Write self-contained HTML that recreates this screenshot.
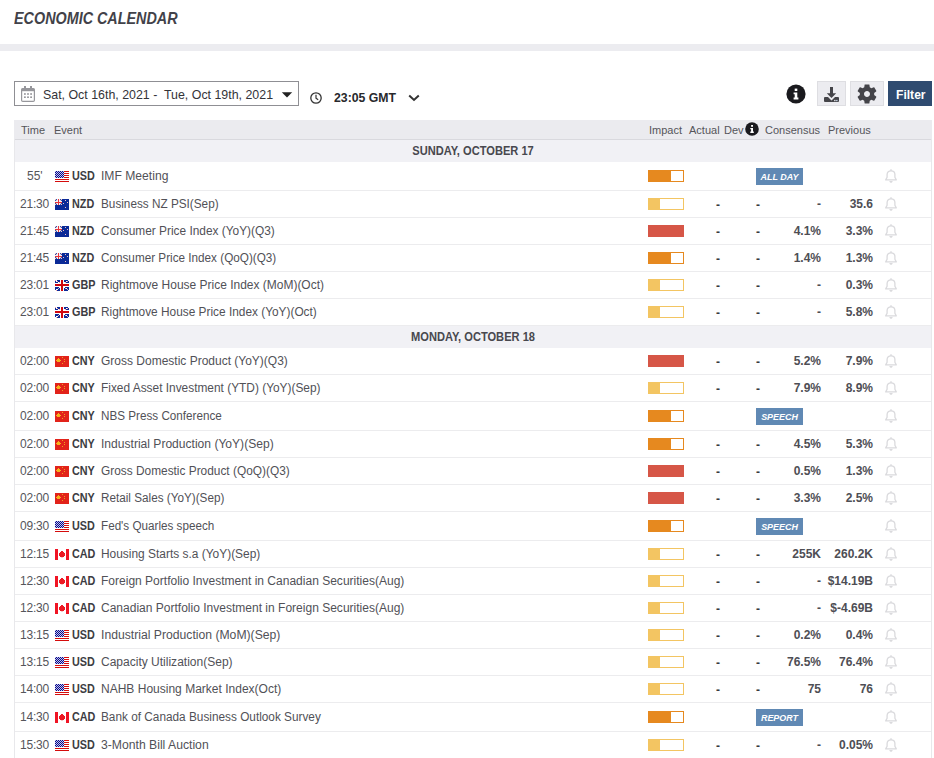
<!DOCTYPE html>
<html><head><meta charset="utf-8"><style>
html,body{margin:0;padding:0;width:934px;height:758px;overflow:hidden;background:#fff}
body{position:relative;font-family:"Liberation Sans", sans-serif;}
.a{position:absolute;white-space:nowrap;}
.t{position:absolute;white-space:nowrap;line-height:1;}
</style></head><body>

<div class="t" style="left:14px;top:10px;font-size:17px;font-weight:bold;font-style:italic;color:#424249;transform-origin:0 0;transform:scaleX(0.845)">ECONOMIC CALENDAR</div>
<div class="a" style="left:0;top:44px;width:934px;height:7px;background:#ececf0"></div>
<div class="a" style="left:14px;top:81px;width:283px;height:23px;border:1px solid #8f8f94;background:#fff"></div>
<svg class="a" style="left:21px;top:86px" width="14" height="16" viewBox="0 0 14 16"><rect x="0.6" y="2.6" width="12.8" height="12.8" rx="1.2" fill="none" stroke="#96969b" stroke-width="1.2"/><rect x="0.6" y="2.6" width="12.8" height="2.6" fill="#96969b"/><rect x="3" y="0" width="2" height="3" fill="#96969b"/><rect x="9" y="0" width="2" height="3" fill="#96969b"/><rect x="3" y="7.2" width="1.8" height="1.6" fill="#96969b"/><rect x="3" y="10.4" width="1.8" height="1.6" fill="#96969b"/><rect x="6.1" y="7.2" width="1.8" height="1.6" fill="#96969b"/><rect x="6.1" y="10.4" width="1.8" height="1.6" fill="#96969b"/><rect x="9.2" y="7.2" width="1.8" height="1.6" fill="#96969b"/><rect x="9.2" y="10.4" width="1.8" height="1.6" fill="#96969b"/></svg>
<div class="t" style="left:43px;top:88px;font-size:13px;color:#333338;transform-origin:0 0;transform:scaleX(0.953)">Sat, Oct 16th, 2021 -&nbsp; Tue, Oct 19th, 2021</div>
<svg class="a" style="left:281px;top:92px" width="12" height="7" viewBox="0 0 12 7"><path d="M0.8 0.3H11.2L6 5.6Z" fill="#222"/></svg>
<svg class="a" style="left:310px;top:92px" width="12" height="12" viewBox="0 0 12 12"><circle cx="6" cy="6" r="5.2" fill="none" stroke="#333" stroke-width="1.3"/><path d="M6 2.8V6.2L8.2 7.8" fill="none" stroke="#333" stroke-width="1.2"/></svg>
<div class="t" style="left:334px;top:91px;font-size:13px;font-weight:bold;color:#28282c;transform-origin:0 0;transform:scaleX(0.943)">23:05 GMT</div>
<svg class="a" style="left:408px;top:94px" width="12" height="8" viewBox="0 0 12 8"><path d="M1.2 1.5L6 6L10.8 1.5" fill="none" stroke="#333" stroke-width="2"/></svg>
<svg class="a" style="left:786px;top:84px" width="20" height="20" viewBox="0 0 20 20"><circle cx="10" cy="10" r="9.6" fill="#1a1a1e"/><rect x="8.7" y="4.6" width="2.6" height="2.4" fill="#fff"/><path d="M7.6 8.4H11.3V13.6H12.4V15.4H7.6V13.6H8.7V10.2H7.6Z" fill="#fff"/></svg>
<div class="a" style="left:817px;top:81px;width:27px;height:23px;border:1px solid #dedee2;background:#ececf0"></div>
<svg class="a" style="left:824px;top:87px" width="15" height="15" viewBox="0 0 15 15"><path d="M6 0H9V6.2H12.2L7.5 11L2.8 6.2H6Z" fill="#444449"/><path d="M0 11Q0 10 1 10H4L7.5 13.4L11 10H14Q15 10 15 11V14Q15 15 14 15H1Q0 15 0 14Z" fill="#444449"/><rect x="10.2" y="12.9" width="1.3" height="1.3" fill="#f4f4f8"/><rect x="12.2" y="12.9" width="1.3" height="1.3" fill="#cfe0f4"/></svg>
<div class="a" style="left:850px;top:81px;width:32px;height:23px;border:1px solid #dedee2;background:#ececf0"></div>
<svg class="a" style="left:855px;top:82px" width="24" height="24" viewBox="0 0 24 24"><path fill-rule="evenodd" d="M19.14,12.94c0.04-0.3,0.06-0.61,0.06-0.94c0-0.32-0.02-0.64-0.07-0.94l2.03-1.58c0.18-0.14,0.23-0.41,0.12-0.61l-1.92-3.32c-0.12-0.22-0.37-0.29-0.59-0.22l-2.39,0.96c-0.5-0.38-1.03-0.7-1.62-0.94L14.4,2.81c-0.04-0.24-0.24-0.41-0.48-0.41h-3.84c-0.24,0-0.43,0.17-0.47,0.41L9.25,5.35C8.66,5.59,8.12,5.92,7.63,6.29L5.24,5.33c-0.22-0.08-0.47,0-0.59,0.22L2.74,8.87C2.62,9.08,2.66,9.34,2.86,9.48l2.03,1.58C4.84,11.36,4.8,11.69,4.8,12s0.02,0.64,0.07,0.94l-2.03,1.58c-0.18,0.14-0.23,0.41-0.12,0.61l1.92,3.32c0.12,0.22,0.37,0.29,0.59,0.22l2.39-0.96c0.5,0.38,1.03,0.7,1.62,0.94l0.36,2.54c0.05,0.24,0.24,0.41,0.48,0.41h3.84c0.24,0,0.44-0.17,0.47-0.41l0.36-2.54c0.59-0.24,1.13-0.56,1.62-0.94l2.39,0.96c0.22,0.08,0.47,0,0.59-0.22l1.92-3.32c0.12-0.22,0.07-0.47-0.12-0.61L19.14,12.94z M12,15C10.34,15 9,13.66 9,12S10.34,9 12,9S15,10.34 15,12S13.66,15 12,15z" fill="#444449"/></svg>
<div class="a" style="left:888px;top:81px;width:44px;height:25px;background:#2f4b70"></div>
<div class="t" style="left:896px;top:88px;font-size:13px;font-weight:bold;color:#fff;transform-origin:0 0;transform:scaleX(0.93)">Filter</div>
<div class="a" style="left:14px;top:120px;width:918px;height:19px;background:#ebebef;border-bottom:1px solid #d9d9de"></div>
<div class="t" style="left:21px;top:125px;font-size:11px;color:#55555a">Time</div>
<div class="t" style="left:54px;top:125px;font-size:11px;color:#55555a">Event</div>
<div class="t" style="left:649px;top:125px;font-size:11px;color:#55555a">Impact</div>
<div class="t" style="left:689px;top:125px;font-size:11px;color:#55555a">Actual</div>
<div class="t" style="left:724px;top:125px;font-size:11px;color:#55555a">Dev</div>
<div class="t" style="left:765px;top:125px;font-size:11px;color:#55555a">Consensus</div>
<div class="t" style="left:828px;top:125px;font-size:11px;color:#55555a">Previous</div>
<svg class="a" style="left:745px;top:122px" width="14" height="14" viewBox="0 0 14 14"><circle cx="7" cy="7" r="6.8" fill="#1a1a1e"/><rect x="6.1" y="3" width="1.9" height="1.8" fill="#fff"/><path d="M5.3 5.9H8V9.6H8.8V11H5.3V9.6H6.1V7.2H5.3Z" fill="#fff"/></svg>
<div class="a" style="left:14px;top:140px;width:918px;height:22px;background:#f1f1f5"></div>
<div class="t" style="left:14px;width:918px;text-align:center;top:145px;font-size:12px;font-weight:bold;color:#48484e;transform:scaleX(0.925)">SUNDAY, OCTOBER 17</div>
<div class="a" style="left:14px;top:162px;width:918px;height:28px;border-bottom:1px solid #ececee"></div>
<div class="t" style="left:27px;top:170px;font-size:12px;color:#55555a">55'</div>
<svg class="a" style="left:55px;top:171px" width="14" height="11" viewBox="0 0 14 11" shape-rendering="crispEdges"><rect x="0" y="0" width="14" height="1" fill="#d50c0c"/><rect x="0" y="1" width="14" height="1" fill="#fff"/><rect x="0" y="2" width="14" height="1" fill="#d50c0c"/><rect x="0" y="3" width="14" height="1" fill="#fff"/><rect x="0" y="4" width="14" height="1" fill="#d50c0c"/><rect x="0" y="5" width="14" height="1" fill="#fff"/><rect x="0" y="6" width="14" height="1" fill="#d50c0c"/><rect x="0" y="7" width="14" height="1" fill="#fff"/><rect x="0" y="8" width="14" height="1" fill="#d50c0c"/><rect x="0" y="9" width="14" height="1" fill="#fff"/><rect x="0" y="10" width="14" height="1" fill="#d50c0c"/><rect x="0" y="0" width="9" height="7" fill="#c4c6e6"/><rect x="1" y="0" width="1" height="1" fill="#06068f"/><rect x="3" y="0" width="1" height="1" fill="#06068f"/><rect x="5" y="0" width="1" height="1" fill="#06068f"/><rect x="7" y="0" width="1" height="1" fill="#06068f"/><rect x="0" y="1" width="1" height="1" fill="#06068f"/><rect x="2" y="1" width="1" height="1" fill="#06068f"/><rect x="4" y="1" width="1" height="1" fill="#06068f"/><rect x="6" y="1" width="1" height="1" fill="#06068f"/><rect x="8" y="1" width="1" height="1" fill="#06068f"/><rect x="1" y="2" width="1" height="1" fill="#06068f"/><rect x="3" y="2" width="1" height="1" fill="#06068f"/><rect x="5" y="2" width="1" height="1" fill="#06068f"/><rect x="7" y="2" width="1" height="1" fill="#06068f"/><rect x="0" y="3" width="1" height="1" fill="#06068f"/><rect x="2" y="3" width="1" height="1" fill="#06068f"/><rect x="4" y="3" width="1" height="1" fill="#06068f"/><rect x="6" y="3" width="1" height="1" fill="#06068f"/><rect x="8" y="3" width="1" height="1" fill="#06068f"/><rect x="1" y="4" width="1" height="1" fill="#06068f"/><rect x="3" y="4" width="1" height="1" fill="#06068f"/><rect x="5" y="4" width="1" height="1" fill="#06068f"/><rect x="7" y="4" width="1" height="1" fill="#06068f"/><rect x="0" y="5" width="1" height="1" fill="#06068f"/><rect x="2" y="5" width="1" height="1" fill="#06068f"/><rect x="4" y="5" width="1" height="1" fill="#06068f"/><rect x="6" y="5" width="1" height="1" fill="#06068f"/><rect x="8" y="5" width="1" height="1" fill="#06068f"/><rect x="1" y="6" width="1" height="1" fill="#06068f"/><rect x="3" y="6" width="1" height="1" fill="#06068f"/><rect x="5" y="6" width="1" height="1" fill="#06068f"/><rect x="7" y="6" width="1" height="1" fill="#06068f"/></svg>
<div class="t" style="left:72px;top:170px;font-size:12px;font-weight:bold;color:#3c3c42;transform-origin:0 0;transform:scaleX(0.9)">USD</div>
<div class="t" style="left:101px;top:170px;font-size:12px;color:#515157;transform-origin:0 0;transform:scaleX(1.0108)">IMF Meeting</div>
<div class="a" style="left:648px;top:170px;width:34px;height:10px;border:1px solid #e6891f;background:#fff"></div>
<div class="a" style="left:648px;top:170px;width:23px;height:12px;background:#e6891f"></div>
<div class="a" style="left:756px;top:168px;width:47px;height:17px;background:#6089b4"></div>
<div class="t" style="left:756px;width:47px;text-align:center;top:171.6px;font-size:9.5px;font-weight:bold;font-style:italic;color:#fff;transform:scaleX(0.94)">ALL DAY</div>
<svg width="13" height="15" viewBox="0.5 0.3 13 15" style="position:absolute;left:885px;top:169px"><path d="M6.5 0.6V2.2" stroke="#dadadd" stroke-width="1.4"/><path d="M1.2 11.2L2.6 8.6V5.8C2.6 3.6 4.3 2.1 6.5 2.1C8.7 2.1 10.4 3.6 10.4 5.8V8.6L11.8 11.2Z" fill="none" stroke="#dadadd" stroke-width="1.3" stroke-linejoin="round"/><path d="M4.9 12.2H8.1C8.1 13.3 7.4 14 6.5 14C5.6 14 4.9 13.3 4.9 12.2Z" fill="#dadadd"/></svg>
<div class="a" style="left:14px;top:191px;width:918px;height:26px;border-bottom:1px solid #ececee"></div>
<div class="t" style="left:20px;top:198px;font-size:12px;color:#55555a;letter-spacing:-0.2px">21:30</div>
<svg class="a" style="left:55px;top:199px" width="14" height="11" viewBox="0 0 14 11" shape-rendering="crispEdges"><rect x="0" y="0" width="14" height="11" fill="#0b2a97"/><rect x="0" y="0" width="1" height="1" fill="#f3c9c3"/><rect x="1" y="0" width="1" height="1" fill="#2c4fb0"/><rect x="2" y="0" width="1" height="1" fill="#f4f4fa"/><rect x="3" y="0" width="1" height="1" fill="#e8343a"/><rect x="4" y="0" width="1" height="1" fill="#f4f4fa"/><rect x="5" y="0" width="1" height="1" fill="#2c4fb0"/><rect x="6" y="0" width="1" height="1" fill="#f3c9c3"/><rect x="0" y="1" width="1" height="1" fill="#2c4fb0"/><rect x="1" y="1" width="1" height="1" fill="#f3c9c3"/><rect x="2" y="1" width="1" height="1" fill="#f4f4fa"/><rect x="3" y="1" width="1" height="1" fill="#e8343a"/><rect x="4" y="1" width="1" height="1" fill="#f4f4fa"/><rect x="5" y="1" width="1" height="1" fill="#f3c9c3"/><rect x="6" y="1" width="1" height="1" fill="#2c4fb0"/><rect x="0" y="2" width="1" height="1" fill="#f4f4fa"/><rect x="1" y="2" width="1" height="1" fill="#f4f4fa"/><rect x="2" y="2" width="1" height="1" fill="#f4f4fa"/><rect x="3" y="2" width="1" height="1" fill="#e8343a"/><rect x="4" y="2" width="1" height="1" fill="#f4f4fa"/><rect x="5" y="2" width="1" height="1" fill="#f4f4fa"/><rect x="6" y="2" width="1" height="1" fill="#f4f4fa"/><rect x="0" y="3" width="1" height="1" fill="#e8343a"/><rect x="1" y="3" width="1" height="1" fill="#e8343a"/><rect x="2" y="3" width="1" height="1" fill="#e8343a"/><rect x="3" y="3" width="1" height="1" fill="#e8343a"/><rect x="4" y="3" width="1" height="1" fill="#e8343a"/><rect x="5" y="3" width="1" height="1" fill="#e8343a"/><rect x="6" y="3" width="1" height="1" fill="#e8343a"/><rect x="0" y="4" width="1" height="1" fill="#2c4fb0"/><rect x="1" y="4" width="1" height="1" fill="#f3c9c3"/><rect x="2" y="4" width="1" height="1" fill="#f4f4fa"/><rect x="3" y="4" width="1" height="1" fill="#e8343a"/><rect x="4" y="4" width="1" height="1" fill="#f4f4fa"/><rect x="5" y="4" width="1" height="1" fill="#f3c9c3"/><rect x="6" y="4" width="1" height="1" fill="#2c4fb0"/><rect x="0" y="5" width="1" height="1" fill="#f3c9c3"/><rect x="1" y="5" width="1" height="1" fill="#2c4fb0"/><rect x="2" y="5" width="1" height="1" fill="#f4f4fa"/><rect x="3" y="5" width="1" height="1" fill="#e8343a"/><rect x="4" y="5" width="1" height="1" fill="#f4f4fa"/><rect x="5" y="5" width="1" height="1" fill="#2c4fb0"/><rect x="6" y="5" width="1" height="1" fill="#f3c9c3"/><rect x="10" y="1" width="1" height="1" fill="#f0c0c0"/><rect x="12" y="3" width="1" height="1" fill="#f0c0c0"/><rect x="8" y="4" width="1" height="1" fill="#f0c0c0"/><rect x="10" y="8" width="1" height="1" fill="#f0c0c0"/></svg>
<div class="t" style="left:72px;top:198px;font-size:12px;font-weight:bold;color:#3c3c42;transform-origin:0 0;transform:scaleX(0.9)">NZD</div>
<div class="t" style="left:101px;top:198px;font-size:12px;color:#515157;transform-origin:0 0;transform:scaleX(0.9797)">Business NZ PSI(Sep)</div>
<div class="a" style="left:648px;top:198px;width:34px;height:10px;border:1px solid #f3c562;background:#fff"></div>
<div class="a" style="left:648px;top:198px;width:12px;height:12px;background:#f3c562"></div>
<div class="t" style="left:680px;width:40px;text-align:right;top:199px;font-size:12px;font-weight:bold;color:#3a3a40">-</div>
<div class="t" style="left:720px;width:40px;text-align:right;top:199px;font-size:12px;font-weight:bold;color:#3a3a40">-</div>
<div class="t" style="left:761px;width:60px;text-align:right;top:198px;font-size:12px;font-weight:bold;color:#4e4e54">-</div>
<div class="t" style="left:812px;width:61px;text-align:right;top:198px;font-size:12px;font-weight:bold;color:#4e4e54">35.6</div>
<svg width="13" height="15" viewBox="0.5 0.3 13 15" style="position:absolute;left:885px;top:197px"><path d="M6.5 0.6V2.2" stroke="#dadadd" stroke-width="1.4"/><path d="M1.2 11.2L2.6 8.6V5.8C2.6 3.6 4.3 2.1 6.5 2.1C8.7 2.1 10.4 3.6 10.4 5.8V8.6L11.8 11.2Z" fill="none" stroke="#dadadd" stroke-width="1.3" stroke-linejoin="round"/><path d="M4.9 12.2H8.1C8.1 13.3 7.4 14 6.5 14C5.6 14 4.9 13.3 4.9 12.2Z" fill="#dadadd"/></svg>
<div class="a" style="left:14px;top:218px;width:918px;height:26px;border-bottom:1px solid #ececee"></div>
<div class="t" style="left:20px;top:225px;font-size:12px;color:#55555a;letter-spacing:-0.2px">21:45</div>
<svg class="a" style="left:55px;top:226px" width="14" height="11" viewBox="0 0 14 11" shape-rendering="crispEdges"><rect x="0" y="0" width="14" height="11" fill="#0b2a97"/><rect x="0" y="0" width="1" height="1" fill="#f3c9c3"/><rect x="1" y="0" width="1" height="1" fill="#2c4fb0"/><rect x="2" y="0" width="1" height="1" fill="#f4f4fa"/><rect x="3" y="0" width="1" height="1" fill="#e8343a"/><rect x="4" y="0" width="1" height="1" fill="#f4f4fa"/><rect x="5" y="0" width="1" height="1" fill="#2c4fb0"/><rect x="6" y="0" width="1" height="1" fill="#f3c9c3"/><rect x="0" y="1" width="1" height="1" fill="#2c4fb0"/><rect x="1" y="1" width="1" height="1" fill="#f3c9c3"/><rect x="2" y="1" width="1" height="1" fill="#f4f4fa"/><rect x="3" y="1" width="1" height="1" fill="#e8343a"/><rect x="4" y="1" width="1" height="1" fill="#f4f4fa"/><rect x="5" y="1" width="1" height="1" fill="#f3c9c3"/><rect x="6" y="1" width="1" height="1" fill="#2c4fb0"/><rect x="0" y="2" width="1" height="1" fill="#f4f4fa"/><rect x="1" y="2" width="1" height="1" fill="#f4f4fa"/><rect x="2" y="2" width="1" height="1" fill="#f4f4fa"/><rect x="3" y="2" width="1" height="1" fill="#e8343a"/><rect x="4" y="2" width="1" height="1" fill="#f4f4fa"/><rect x="5" y="2" width="1" height="1" fill="#f4f4fa"/><rect x="6" y="2" width="1" height="1" fill="#f4f4fa"/><rect x="0" y="3" width="1" height="1" fill="#e8343a"/><rect x="1" y="3" width="1" height="1" fill="#e8343a"/><rect x="2" y="3" width="1" height="1" fill="#e8343a"/><rect x="3" y="3" width="1" height="1" fill="#e8343a"/><rect x="4" y="3" width="1" height="1" fill="#e8343a"/><rect x="5" y="3" width="1" height="1" fill="#e8343a"/><rect x="6" y="3" width="1" height="1" fill="#e8343a"/><rect x="0" y="4" width="1" height="1" fill="#2c4fb0"/><rect x="1" y="4" width="1" height="1" fill="#f3c9c3"/><rect x="2" y="4" width="1" height="1" fill="#f4f4fa"/><rect x="3" y="4" width="1" height="1" fill="#e8343a"/><rect x="4" y="4" width="1" height="1" fill="#f4f4fa"/><rect x="5" y="4" width="1" height="1" fill="#f3c9c3"/><rect x="6" y="4" width="1" height="1" fill="#2c4fb0"/><rect x="0" y="5" width="1" height="1" fill="#f3c9c3"/><rect x="1" y="5" width="1" height="1" fill="#2c4fb0"/><rect x="2" y="5" width="1" height="1" fill="#f4f4fa"/><rect x="3" y="5" width="1" height="1" fill="#e8343a"/><rect x="4" y="5" width="1" height="1" fill="#f4f4fa"/><rect x="5" y="5" width="1" height="1" fill="#2c4fb0"/><rect x="6" y="5" width="1" height="1" fill="#f3c9c3"/><rect x="10" y="1" width="1" height="1" fill="#f0c0c0"/><rect x="12" y="3" width="1" height="1" fill="#f0c0c0"/><rect x="8" y="4" width="1" height="1" fill="#f0c0c0"/><rect x="10" y="8" width="1" height="1" fill="#f0c0c0"/></svg>
<div class="t" style="left:72px;top:225px;font-size:12px;font-weight:bold;color:#3c3c42;transform-origin:0 0;transform:scaleX(0.9)">NZD</div>
<div class="t" style="left:101px;top:225px;font-size:12px;color:#515157;transform-origin:0 0;transform:scaleX(0.9897)">Consumer Price Index (YoY)(Q3)</div>
<div class="a" style="left:648px;top:225px;width:34px;height:10px;border:1px solid #d65647;background:#fff"></div>
<div class="a" style="left:648px;top:225px;width:36px;height:12px;background:#d65647"></div>
<div class="t" style="left:680px;width:40px;text-align:right;top:226px;font-size:12px;font-weight:bold;color:#3a3a40">-</div>
<div class="t" style="left:720px;width:40px;text-align:right;top:226px;font-size:12px;font-weight:bold;color:#3a3a40">-</div>
<div class="t" style="left:761px;width:60px;text-align:right;top:225px;font-size:12px;font-weight:bold;color:#4e4e54">4.1%</div>
<div class="t" style="left:812px;width:61px;text-align:right;top:225px;font-size:12px;font-weight:bold;color:#4e4e54">3.3%</div>
<svg width="13" height="15" viewBox="0.5 0.3 13 15" style="position:absolute;left:885px;top:224px"><path d="M6.5 0.6V2.2" stroke="#dadadd" stroke-width="1.4"/><path d="M1.2 11.2L2.6 8.6V5.8C2.6 3.6 4.3 2.1 6.5 2.1C8.7 2.1 10.4 3.6 10.4 5.8V8.6L11.8 11.2Z" fill="none" stroke="#dadadd" stroke-width="1.3" stroke-linejoin="round"/><path d="M4.9 12.2H8.1C8.1 13.3 7.4 14 6.5 14C5.6 14 4.9 13.3 4.9 12.2Z" fill="#dadadd"/></svg>
<div class="a" style="left:14px;top:245px;width:918px;height:26px;border-bottom:1px solid #ececee"></div>
<div class="t" style="left:20px;top:252px;font-size:12px;color:#55555a;letter-spacing:-0.2px">21:45</div>
<svg class="a" style="left:55px;top:253px" width="14" height="11" viewBox="0 0 14 11" shape-rendering="crispEdges"><rect x="0" y="0" width="14" height="11" fill="#0b2a97"/><rect x="0" y="0" width="1" height="1" fill="#f3c9c3"/><rect x="1" y="0" width="1" height="1" fill="#2c4fb0"/><rect x="2" y="0" width="1" height="1" fill="#f4f4fa"/><rect x="3" y="0" width="1" height="1" fill="#e8343a"/><rect x="4" y="0" width="1" height="1" fill="#f4f4fa"/><rect x="5" y="0" width="1" height="1" fill="#2c4fb0"/><rect x="6" y="0" width="1" height="1" fill="#f3c9c3"/><rect x="0" y="1" width="1" height="1" fill="#2c4fb0"/><rect x="1" y="1" width="1" height="1" fill="#f3c9c3"/><rect x="2" y="1" width="1" height="1" fill="#f4f4fa"/><rect x="3" y="1" width="1" height="1" fill="#e8343a"/><rect x="4" y="1" width="1" height="1" fill="#f4f4fa"/><rect x="5" y="1" width="1" height="1" fill="#f3c9c3"/><rect x="6" y="1" width="1" height="1" fill="#2c4fb0"/><rect x="0" y="2" width="1" height="1" fill="#f4f4fa"/><rect x="1" y="2" width="1" height="1" fill="#f4f4fa"/><rect x="2" y="2" width="1" height="1" fill="#f4f4fa"/><rect x="3" y="2" width="1" height="1" fill="#e8343a"/><rect x="4" y="2" width="1" height="1" fill="#f4f4fa"/><rect x="5" y="2" width="1" height="1" fill="#f4f4fa"/><rect x="6" y="2" width="1" height="1" fill="#f4f4fa"/><rect x="0" y="3" width="1" height="1" fill="#e8343a"/><rect x="1" y="3" width="1" height="1" fill="#e8343a"/><rect x="2" y="3" width="1" height="1" fill="#e8343a"/><rect x="3" y="3" width="1" height="1" fill="#e8343a"/><rect x="4" y="3" width="1" height="1" fill="#e8343a"/><rect x="5" y="3" width="1" height="1" fill="#e8343a"/><rect x="6" y="3" width="1" height="1" fill="#e8343a"/><rect x="0" y="4" width="1" height="1" fill="#2c4fb0"/><rect x="1" y="4" width="1" height="1" fill="#f3c9c3"/><rect x="2" y="4" width="1" height="1" fill="#f4f4fa"/><rect x="3" y="4" width="1" height="1" fill="#e8343a"/><rect x="4" y="4" width="1" height="1" fill="#f4f4fa"/><rect x="5" y="4" width="1" height="1" fill="#f3c9c3"/><rect x="6" y="4" width="1" height="1" fill="#2c4fb0"/><rect x="0" y="5" width="1" height="1" fill="#f3c9c3"/><rect x="1" y="5" width="1" height="1" fill="#2c4fb0"/><rect x="2" y="5" width="1" height="1" fill="#f4f4fa"/><rect x="3" y="5" width="1" height="1" fill="#e8343a"/><rect x="4" y="5" width="1" height="1" fill="#f4f4fa"/><rect x="5" y="5" width="1" height="1" fill="#2c4fb0"/><rect x="6" y="5" width="1" height="1" fill="#f3c9c3"/><rect x="10" y="1" width="1" height="1" fill="#f0c0c0"/><rect x="12" y="3" width="1" height="1" fill="#f0c0c0"/><rect x="8" y="4" width="1" height="1" fill="#f0c0c0"/><rect x="10" y="8" width="1" height="1" fill="#f0c0c0"/></svg>
<div class="t" style="left:72px;top:252px;font-size:12px;font-weight:bold;color:#3c3c42;transform-origin:0 0;transform:scaleX(0.9)">NZD</div>
<div class="t" style="left:101px;top:252px;font-size:12px;color:#515157;transform-origin:0 0;transform:scaleX(0.977)">Consumer Price Index (QoQ)(Q3)</div>
<div class="a" style="left:648px;top:252px;width:34px;height:10px;border:1px solid #e6891f;background:#fff"></div>
<div class="a" style="left:648px;top:252px;width:23px;height:12px;background:#e6891f"></div>
<div class="t" style="left:680px;width:40px;text-align:right;top:253px;font-size:12px;font-weight:bold;color:#3a3a40">-</div>
<div class="t" style="left:720px;width:40px;text-align:right;top:253px;font-size:12px;font-weight:bold;color:#3a3a40">-</div>
<div class="t" style="left:761px;width:60px;text-align:right;top:252px;font-size:12px;font-weight:bold;color:#4e4e54">1.4%</div>
<div class="t" style="left:812px;width:61px;text-align:right;top:252px;font-size:12px;font-weight:bold;color:#4e4e54">1.3%</div>
<svg width="13" height="15" viewBox="0.5 0.3 13 15" style="position:absolute;left:885px;top:251px"><path d="M6.5 0.6V2.2" stroke="#dadadd" stroke-width="1.4"/><path d="M1.2 11.2L2.6 8.6V5.8C2.6 3.6 4.3 2.1 6.5 2.1C8.7 2.1 10.4 3.6 10.4 5.8V8.6L11.8 11.2Z" fill="none" stroke="#dadadd" stroke-width="1.3" stroke-linejoin="round"/><path d="M4.9 12.2H8.1C8.1 13.3 7.4 14 6.5 14C5.6 14 4.9 13.3 4.9 12.2Z" fill="#dadadd"/></svg>
<div class="a" style="left:14px;top:272px;width:918px;height:26px;border-bottom:1px solid #ececee"></div>
<div class="t" style="left:20px;top:279px;font-size:12px;color:#55555a;letter-spacing:-0.2px">23:01</div>
<svg class="a" style="left:55px;top:280px" width="14" height="11" viewBox="0 0 14 11" shape-rendering="crispEdges"><rect x="0" y="0" width="14" height="11" fill="#fff"/><rect x="0" y="0" width="5" height="3" fill="#0c2a9a"/><rect x="9" y="0" width="5" height="3" fill="#0c2a9a"/><rect x="0" y="7" width="5" height="4" fill="#0c2a9a"/><rect x="9" y="7" width="5" height="4" fill="#0c2a9a"/><rect x="0" y="0" width="1" height="1" fill="#fff"/><rect x="1" y="0" width="1" height="1" fill="#fff"/><rect x="1" y="1" width="1" height="1" fill="#fff"/><rect x="2" y="1" width="1" height="1" fill="#fff"/><rect x="3" y="2" width="1" height="1" fill="#fff"/><rect x="4" y="2" width="1" height="1" fill="#fff"/><rect x="13" y="0" width="1" height="1" fill="#fff"/><rect x="12" y="1" width="1" height="1" fill="#fff"/><rect x="11" y="1" width="1" height="1" fill="#fff"/><rect x="10" y="2" width="1" height="1" fill="#fff"/><rect x="9" y="2" width="1" height="1" fill="#fff"/><rect x="0" y="10" width="1" height="1" fill="#fff"/><rect x="1" y="9" width="1" height="1" fill="#fff"/><rect x="2" y="9" width="1" height="1" fill="#fff"/><rect x="3" y="8" width="1" height="1" fill="#fff"/><rect x="4" y="7" width="1" height="1" fill="#fff"/><rect x="13" y="10" width="1" height="1" fill="#fff"/><rect x="12" y="9" width="1" height="1" fill="#fff"/><rect x="11" y="8" width="1" height="1" fill="#fff"/><rect x="10" y="8" width="1" height="1" fill="#fff"/><rect x="9" y="7" width="1" height="1" fill="#fff"/><rect x="0" y="0" width="1" height="1" fill="#f2a8a8"/><rect x="2" y="1" width="1" height="1" fill="#f2a8a8"/><rect x="4" y="2" width="1" height="1" fill="#f2a8a8"/><rect x="12" y="1" width="1" height="1" fill="#f2a8a8"/><rect x="10" y="2" width="1" height="1" fill="#f2a8a8"/><rect x="1" y="10" width="1" height="1" fill="#f2a8a8"/><rect x="3" y="8" width="1" height="1" fill="#f2a8a8"/><rect x="12" y="9" width="1" height="1" fill="#f2a8a8"/><rect x="10" y="8" width="1" height="1" fill="#f2a8a8"/><rect x="6" y="0" width="2" height="11" fill="#d0070f"/><rect x="0" y="4" width="14" height="2" fill="#d0070f"/></svg>
<div class="t" style="left:72px;top:279px;font-size:12px;font-weight:bold;color:#3c3c42;transform-origin:0 0;transform:scaleX(0.9)">GBP</div>
<div class="t" style="left:101px;top:279px;font-size:12px;color:#515157;transform-origin:0 0;transform:scaleX(0.9982)">Rightmove House Price Index (MoM)(Oct)</div>
<div class="a" style="left:648px;top:279px;width:34px;height:10px;border:1px solid #f3c562;background:#fff"></div>
<div class="a" style="left:648px;top:279px;width:12px;height:12px;background:#f3c562"></div>
<div class="t" style="left:680px;width:40px;text-align:right;top:280px;font-size:12px;font-weight:bold;color:#3a3a40">-</div>
<div class="t" style="left:720px;width:40px;text-align:right;top:280px;font-size:12px;font-weight:bold;color:#3a3a40">-</div>
<div class="t" style="left:761px;width:60px;text-align:right;top:279px;font-size:12px;font-weight:bold;color:#4e4e54">-</div>
<div class="t" style="left:812px;width:61px;text-align:right;top:279px;font-size:12px;font-weight:bold;color:#4e4e54">0.3%</div>
<svg width="13" height="15" viewBox="0.5 0.3 13 15" style="position:absolute;left:885px;top:278px"><path d="M6.5 0.6V2.2" stroke="#dadadd" stroke-width="1.4"/><path d="M1.2 11.2L2.6 8.6V5.8C2.6 3.6 4.3 2.1 6.5 2.1C8.7 2.1 10.4 3.6 10.4 5.8V8.6L11.8 11.2Z" fill="none" stroke="#dadadd" stroke-width="1.3" stroke-linejoin="round"/><path d="M4.9 12.2H8.1C8.1 13.3 7.4 14 6.5 14C5.6 14 4.9 13.3 4.9 12.2Z" fill="#dadadd"/></svg>
<div class="a" style="left:14px;top:299px;width:918px;height:26px;border-bottom:1px solid #ececee"></div>
<div class="t" style="left:20px;top:306px;font-size:12px;color:#55555a;letter-spacing:-0.2px">23:01</div>
<svg class="a" style="left:55px;top:307px" width="14" height="11" viewBox="0 0 14 11" shape-rendering="crispEdges"><rect x="0" y="0" width="14" height="11" fill="#fff"/><rect x="0" y="0" width="5" height="3" fill="#0c2a9a"/><rect x="9" y="0" width="5" height="3" fill="#0c2a9a"/><rect x="0" y="7" width="5" height="4" fill="#0c2a9a"/><rect x="9" y="7" width="5" height="4" fill="#0c2a9a"/><rect x="0" y="0" width="1" height="1" fill="#fff"/><rect x="1" y="0" width="1" height="1" fill="#fff"/><rect x="1" y="1" width="1" height="1" fill="#fff"/><rect x="2" y="1" width="1" height="1" fill="#fff"/><rect x="3" y="2" width="1" height="1" fill="#fff"/><rect x="4" y="2" width="1" height="1" fill="#fff"/><rect x="13" y="0" width="1" height="1" fill="#fff"/><rect x="12" y="1" width="1" height="1" fill="#fff"/><rect x="11" y="1" width="1" height="1" fill="#fff"/><rect x="10" y="2" width="1" height="1" fill="#fff"/><rect x="9" y="2" width="1" height="1" fill="#fff"/><rect x="0" y="10" width="1" height="1" fill="#fff"/><rect x="1" y="9" width="1" height="1" fill="#fff"/><rect x="2" y="9" width="1" height="1" fill="#fff"/><rect x="3" y="8" width="1" height="1" fill="#fff"/><rect x="4" y="7" width="1" height="1" fill="#fff"/><rect x="13" y="10" width="1" height="1" fill="#fff"/><rect x="12" y="9" width="1" height="1" fill="#fff"/><rect x="11" y="8" width="1" height="1" fill="#fff"/><rect x="10" y="8" width="1" height="1" fill="#fff"/><rect x="9" y="7" width="1" height="1" fill="#fff"/><rect x="0" y="0" width="1" height="1" fill="#f2a8a8"/><rect x="2" y="1" width="1" height="1" fill="#f2a8a8"/><rect x="4" y="2" width="1" height="1" fill="#f2a8a8"/><rect x="12" y="1" width="1" height="1" fill="#f2a8a8"/><rect x="10" y="2" width="1" height="1" fill="#f2a8a8"/><rect x="1" y="10" width="1" height="1" fill="#f2a8a8"/><rect x="3" y="8" width="1" height="1" fill="#f2a8a8"/><rect x="12" y="9" width="1" height="1" fill="#f2a8a8"/><rect x="10" y="8" width="1" height="1" fill="#f2a8a8"/><rect x="6" y="0" width="2" height="11" fill="#d0070f"/><rect x="0" y="4" width="14" height="2" fill="#d0070f"/></svg>
<div class="t" style="left:72px;top:306px;font-size:12px;font-weight:bold;color:#3c3c42;transform-origin:0 0;transform:scaleX(0.9)">GBP</div>
<div class="t" style="left:101px;top:306px;font-size:12px;color:#515157;transform-origin:0 0;transform:scaleX(0.9885)">Rightmove House Price Index (YoY)(Oct)</div>
<div class="a" style="left:648px;top:306px;width:34px;height:10px;border:1px solid #f3c562;background:#fff"></div>
<div class="a" style="left:648px;top:306px;width:12px;height:12px;background:#f3c562"></div>
<div class="t" style="left:680px;width:40px;text-align:right;top:307px;font-size:12px;font-weight:bold;color:#3a3a40">-</div>
<div class="t" style="left:720px;width:40px;text-align:right;top:307px;font-size:12px;font-weight:bold;color:#3a3a40">-</div>
<div class="t" style="left:761px;width:60px;text-align:right;top:306px;font-size:12px;font-weight:bold;color:#4e4e54">-</div>
<div class="t" style="left:812px;width:61px;text-align:right;top:306px;font-size:12px;font-weight:bold;color:#4e4e54">5.8%</div>
<svg width="13" height="15" viewBox="0.5 0.3 13 15" style="position:absolute;left:885px;top:305px"><path d="M6.5 0.6V2.2" stroke="#dadadd" stroke-width="1.4"/><path d="M1.2 11.2L2.6 8.6V5.8C2.6 3.6 4.3 2.1 6.5 2.1C8.7 2.1 10.4 3.6 10.4 5.8V8.6L11.8 11.2Z" fill="none" stroke="#dadadd" stroke-width="1.3" stroke-linejoin="round"/><path d="M4.9 12.2H8.1C8.1 13.3 7.4 14 6.5 14C5.6 14 4.9 13.3 4.9 12.2Z" fill="#dadadd"/></svg>
<div class="a" style="left:14px;top:326px;width:918px;height:22px;background:#f1f1f5"></div>
<div class="t" style="left:14px;width:918px;text-align:center;top:331px;font-size:12px;font-weight:bold;color:#48484e;transform:scaleX(0.925)">MONDAY, OCTOBER 18</div>
<div class="a" style="left:14px;top:348px;width:918px;height:26px;border-bottom:1px solid #ececee"></div>
<div class="t" style="left:20px;top:355px;font-size:12px;color:#55555a;letter-spacing:-0.2px">02:00</div>
<svg class="a" style="left:55px;top:356px" width="14" height="11" viewBox="0 0 14 11" shape-rendering="crispEdges"><rect x="0" y="0" width="14" height="11" fill="#e2231a"/><rect x="3" y="2" width="1" height="1" fill="#f6b21c"/><rect x="2" y="3" width="3" height="3" fill="#f6b21c"/><rect x="1" y="4" width="5" height="1" fill="#f6b21c"/><rect x="7" y="1" width="1" height="1" fill="#f0a020"/><rect x="9" y="3" width="1" height="1" fill="#f0a020"/><rect x="9" y="5" width="1" height="1" fill="#f0a020"/><rect x="7" y="7" width="1" height="1" fill="#f0a020"/></svg>
<div class="t" style="left:72px;top:355px;font-size:12px;font-weight:bold;color:#3c3c42;transform-origin:0 0;transform:scaleX(0.9)">CNY</div>
<div class="t" style="left:101px;top:355px;font-size:12px;color:#515157;transform-origin:0 0;transform:scaleX(0.9995)">Gross Domestic Product (YoY)(Q3)</div>
<div class="a" style="left:648px;top:355px;width:34px;height:10px;border:1px solid #d65647;background:#fff"></div>
<div class="a" style="left:648px;top:355px;width:36px;height:12px;background:#d65647"></div>
<div class="t" style="left:680px;width:40px;text-align:right;top:356px;font-size:12px;font-weight:bold;color:#3a3a40">-</div>
<div class="t" style="left:720px;width:40px;text-align:right;top:356px;font-size:12px;font-weight:bold;color:#3a3a40">-</div>
<div class="t" style="left:761px;width:60px;text-align:right;top:355px;font-size:12px;font-weight:bold;color:#4e4e54">5.2%</div>
<div class="t" style="left:812px;width:61px;text-align:right;top:355px;font-size:12px;font-weight:bold;color:#4e4e54">7.9%</div>
<svg width="13" height="15" viewBox="0.5 0.3 13 15" style="position:absolute;left:885px;top:354px"><path d="M6.5 0.6V2.2" stroke="#dadadd" stroke-width="1.4"/><path d="M1.2 11.2L2.6 8.6V5.8C2.6 3.6 4.3 2.1 6.5 2.1C8.7 2.1 10.4 3.6 10.4 5.8V8.6L11.8 11.2Z" fill="none" stroke="#dadadd" stroke-width="1.3" stroke-linejoin="round"/><path d="M4.9 12.2H8.1C8.1 13.3 7.4 14 6.5 14C5.6 14 4.9 13.3 4.9 12.2Z" fill="#dadadd"/></svg>
<div class="a" style="left:14px;top:375px;width:918px;height:26px;border-bottom:1px solid #ececee"></div>
<div class="t" style="left:20px;top:382px;font-size:12px;color:#55555a;letter-spacing:-0.2px">02:00</div>
<svg class="a" style="left:55px;top:383px" width="14" height="11" viewBox="0 0 14 11" shape-rendering="crispEdges"><rect x="0" y="0" width="14" height="11" fill="#e2231a"/><rect x="3" y="2" width="1" height="1" fill="#f6b21c"/><rect x="2" y="3" width="3" height="3" fill="#f6b21c"/><rect x="1" y="4" width="5" height="1" fill="#f6b21c"/><rect x="7" y="1" width="1" height="1" fill="#f0a020"/><rect x="9" y="3" width="1" height="1" fill="#f0a020"/><rect x="9" y="5" width="1" height="1" fill="#f0a020"/><rect x="7" y="7" width="1" height="1" fill="#f0a020"/></svg>
<div class="t" style="left:72px;top:382px;font-size:12px;font-weight:bold;color:#3c3c42;transform-origin:0 0;transform:scaleX(0.9)">CNY</div>
<div class="t" style="left:101px;top:382px;font-size:12px;color:#515157;transform-origin:0 0;transform:scaleX(0.9905)">Fixed Asset Investment (YTD) (YoY)(Sep)</div>
<div class="a" style="left:648px;top:382px;width:34px;height:10px;border:1px solid #f3c562;background:#fff"></div>
<div class="a" style="left:648px;top:382px;width:12px;height:12px;background:#f3c562"></div>
<div class="t" style="left:680px;width:40px;text-align:right;top:383px;font-size:12px;font-weight:bold;color:#3a3a40">-</div>
<div class="t" style="left:720px;width:40px;text-align:right;top:383px;font-size:12px;font-weight:bold;color:#3a3a40">-</div>
<div class="t" style="left:761px;width:60px;text-align:right;top:382px;font-size:12px;font-weight:bold;color:#4e4e54">7.9%</div>
<div class="t" style="left:812px;width:61px;text-align:right;top:382px;font-size:12px;font-weight:bold;color:#4e4e54">8.9%</div>
<svg width="13" height="15" viewBox="0.5 0.3 13 15" style="position:absolute;left:885px;top:381px"><path d="M6.5 0.6V2.2" stroke="#dadadd" stroke-width="1.4"/><path d="M1.2 11.2L2.6 8.6V5.8C2.6 3.6 4.3 2.1 6.5 2.1C8.7 2.1 10.4 3.6 10.4 5.8V8.6L11.8 11.2Z" fill="none" stroke="#dadadd" stroke-width="1.3" stroke-linejoin="round"/><path d="M4.9 12.2H8.1C8.1 13.3 7.4 14 6.5 14C5.6 14 4.9 13.3 4.9 12.2Z" fill="#dadadd"/></svg>
<div class="a" style="left:14px;top:402px;width:918px;height:28px;border-bottom:1px solid #ececee"></div>
<div class="t" style="left:20px;top:410px;font-size:12px;color:#55555a;letter-spacing:-0.2px">02:00</div>
<svg class="a" style="left:55px;top:411px" width="14" height="11" viewBox="0 0 14 11" shape-rendering="crispEdges"><rect x="0" y="0" width="14" height="11" fill="#e2231a"/><rect x="3" y="2" width="1" height="1" fill="#f6b21c"/><rect x="2" y="3" width="3" height="3" fill="#f6b21c"/><rect x="1" y="4" width="5" height="1" fill="#f6b21c"/><rect x="7" y="1" width="1" height="1" fill="#f0a020"/><rect x="9" y="3" width="1" height="1" fill="#f0a020"/><rect x="9" y="5" width="1" height="1" fill="#f0a020"/><rect x="7" y="7" width="1" height="1" fill="#f0a020"/></svg>
<div class="t" style="left:72px;top:410px;font-size:12px;font-weight:bold;color:#3c3c42;transform-origin:0 0;transform:scaleX(0.9)">CNY</div>
<div class="t" style="left:101px;top:410px;font-size:12px;color:#515157;transform-origin:0 0;transform:scaleX(0.974)">NBS Press Conference</div>
<div class="a" style="left:648px;top:410px;width:34px;height:10px;border:1px solid #e6891f;background:#fff"></div>
<div class="a" style="left:648px;top:410px;width:23px;height:12px;background:#e6891f"></div>
<div class="a" style="left:756px;top:408px;width:47px;height:17px;background:#6089b4"></div>
<div class="t" style="left:756px;width:47px;text-align:center;top:411.6px;font-size:9.5px;font-weight:bold;font-style:italic;color:#fff;transform:scaleX(0.94)">SPEECH</div>
<svg width="13" height="15" viewBox="0.5 0.3 13 15" style="position:absolute;left:885px;top:409px"><path d="M6.5 0.6V2.2" stroke="#dadadd" stroke-width="1.4"/><path d="M1.2 11.2L2.6 8.6V5.8C2.6 3.6 4.3 2.1 6.5 2.1C8.7 2.1 10.4 3.6 10.4 5.8V8.6L11.8 11.2Z" fill="none" stroke="#dadadd" stroke-width="1.3" stroke-linejoin="round"/><path d="M4.9 12.2H8.1C8.1 13.3 7.4 14 6.5 14C5.6 14 4.9 13.3 4.9 12.2Z" fill="#dadadd"/></svg>
<div class="a" style="left:14px;top:431px;width:918px;height:26px;border-bottom:1px solid #ececee"></div>
<div class="t" style="left:20px;top:438px;font-size:12px;color:#55555a;letter-spacing:-0.2px">02:00</div>
<svg class="a" style="left:55px;top:439px" width="14" height="11" viewBox="0 0 14 11" shape-rendering="crispEdges"><rect x="0" y="0" width="14" height="11" fill="#e2231a"/><rect x="3" y="2" width="1" height="1" fill="#f6b21c"/><rect x="2" y="3" width="3" height="3" fill="#f6b21c"/><rect x="1" y="4" width="5" height="1" fill="#f6b21c"/><rect x="7" y="1" width="1" height="1" fill="#f0a020"/><rect x="9" y="3" width="1" height="1" fill="#f0a020"/><rect x="9" y="5" width="1" height="1" fill="#f0a020"/><rect x="7" y="7" width="1" height="1" fill="#f0a020"/></svg>
<div class="t" style="left:72px;top:438px;font-size:12px;font-weight:bold;color:#3c3c42;transform-origin:0 0;transform:scaleX(0.9)">CNY</div>
<div class="t" style="left:101px;top:438px;font-size:12px;color:#515157;transform-origin:0 0;transform:scaleX(1.0059)">Industrial Production (YoY)(Sep)</div>
<div class="a" style="left:648px;top:438px;width:34px;height:10px;border:1px solid #e6891f;background:#fff"></div>
<div class="a" style="left:648px;top:438px;width:23px;height:12px;background:#e6891f"></div>
<div class="t" style="left:680px;width:40px;text-align:right;top:439px;font-size:12px;font-weight:bold;color:#3a3a40">-</div>
<div class="t" style="left:720px;width:40px;text-align:right;top:439px;font-size:12px;font-weight:bold;color:#3a3a40">-</div>
<div class="t" style="left:761px;width:60px;text-align:right;top:438px;font-size:12px;font-weight:bold;color:#4e4e54">4.5%</div>
<div class="t" style="left:812px;width:61px;text-align:right;top:438px;font-size:12px;font-weight:bold;color:#4e4e54">5.3%</div>
<svg width="13" height="15" viewBox="0.5 0.3 13 15" style="position:absolute;left:885px;top:437px"><path d="M6.5 0.6V2.2" stroke="#dadadd" stroke-width="1.4"/><path d="M1.2 11.2L2.6 8.6V5.8C2.6 3.6 4.3 2.1 6.5 2.1C8.7 2.1 10.4 3.6 10.4 5.8V8.6L11.8 11.2Z" fill="none" stroke="#dadadd" stroke-width="1.3" stroke-linejoin="round"/><path d="M4.9 12.2H8.1C8.1 13.3 7.4 14 6.5 14C5.6 14 4.9 13.3 4.9 12.2Z" fill="#dadadd"/></svg>
<div class="a" style="left:14px;top:458px;width:918px;height:26px;border-bottom:1px solid #ececee"></div>
<div class="t" style="left:20px;top:465px;font-size:12px;color:#55555a;letter-spacing:-0.2px">02:00</div>
<svg class="a" style="left:55px;top:466px" width="14" height="11" viewBox="0 0 14 11" shape-rendering="crispEdges"><rect x="0" y="0" width="14" height="11" fill="#e2231a"/><rect x="3" y="2" width="1" height="1" fill="#f6b21c"/><rect x="2" y="3" width="3" height="3" fill="#f6b21c"/><rect x="1" y="4" width="5" height="1" fill="#f6b21c"/><rect x="7" y="1" width="1" height="1" fill="#f0a020"/><rect x="9" y="3" width="1" height="1" fill="#f0a020"/><rect x="9" y="5" width="1" height="1" fill="#f0a020"/><rect x="7" y="7" width="1" height="1" fill="#f0a020"/></svg>
<div class="t" style="left:72px;top:465px;font-size:12px;font-weight:bold;color:#3c3c42;transform-origin:0 0;transform:scaleX(0.9)">CNY</div>
<div class="t" style="left:101px;top:465px;font-size:12px;color:#515157;transform-origin:0 0;transform:scaleX(0.9894)">Gross Domestic Product (QoQ)(Q3)</div>
<div class="a" style="left:648px;top:465px;width:34px;height:10px;border:1px solid #d65647;background:#fff"></div>
<div class="a" style="left:648px;top:465px;width:36px;height:12px;background:#d65647"></div>
<div class="t" style="left:680px;width:40px;text-align:right;top:466px;font-size:12px;font-weight:bold;color:#3a3a40">-</div>
<div class="t" style="left:720px;width:40px;text-align:right;top:466px;font-size:12px;font-weight:bold;color:#3a3a40">-</div>
<div class="t" style="left:761px;width:60px;text-align:right;top:465px;font-size:12px;font-weight:bold;color:#4e4e54">0.5%</div>
<div class="t" style="left:812px;width:61px;text-align:right;top:465px;font-size:12px;font-weight:bold;color:#4e4e54">1.3%</div>
<svg width="13" height="15" viewBox="0.5 0.3 13 15" style="position:absolute;left:885px;top:464px"><path d="M6.5 0.6V2.2" stroke="#dadadd" stroke-width="1.4"/><path d="M1.2 11.2L2.6 8.6V5.8C2.6 3.6 4.3 2.1 6.5 2.1C8.7 2.1 10.4 3.6 10.4 5.8V8.6L11.8 11.2Z" fill="none" stroke="#dadadd" stroke-width="1.3" stroke-linejoin="round"/><path d="M4.9 12.2H8.1C8.1 13.3 7.4 14 6.5 14C5.6 14 4.9 13.3 4.9 12.2Z" fill="#dadadd"/></svg>
<div class="a" style="left:14px;top:485px;width:918px;height:26px;border-bottom:1px solid #ececee"></div>
<div class="t" style="left:20px;top:492px;font-size:12px;color:#55555a;letter-spacing:-0.2px">02:00</div>
<svg class="a" style="left:55px;top:493px" width="14" height="11" viewBox="0 0 14 11" shape-rendering="crispEdges"><rect x="0" y="0" width="14" height="11" fill="#e2231a"/><rect x="3" y="2" width="1" height="1" fill="#f6b21c"/><rect x="2" y="3" width="3" height="3" fill="#f6b21c"/><rect x="1" y="4" width="5" height="1" fill="#f6b21c"/><rect x="7" y="1" width="1" height="1" fill="#f0a020"/><rect x="9" y="3" width="1" height="1" fill="#f0a020"/><rect x="9" y="5" width="1" height="1" fill="#f0a020"/><rect x="7" y="7" width="1" height="1" fill="#f0a020"/></svg>
<div class="t" style="left:72px;top:492px;font-size:12px;font-weight:bold;color:#3c3c42;transform-origin:0 0;transform:scaleX(0.9)">CNY</div>
<div class="t" style="left:101px;top:492px;font-size:12px;color:#515157;transform-origin:0 0;transform:scaleX(0.9768)">Retail Sales (YoY)(Sep)</div>
<div class="a" style="left:648px;top:492px;width:34px;height:10px;border:1px solid #d65647;background:#fff"></div>
<div class="a" style="left:648px;top:492px;width:36px;height:12px;background:#d65647"></div>
<div class="t" style="left:680px;width:40px;text-align:right;top:493px;font-size:12px;font-weight:bold;color:#3a3a40">-</div>
<div class="t" style="left:720px;width:40px;text-align:right;top:493px;font-size:12px;font-weight:bold;color:#3a3a40">-</div>
<div class="t" style="left:761px;width:60px;text-align:right;top:492px;font-size:12px;font-weight:bold;color:#4e4e54">3.3%</div>
<div class="t" style="left:812px;width:61px;text-align:right;top:492px;font-size:12px;font-weight:bold;color:#4e4e54">2.5%</div>
<svg width="13" height="15" viewBox="0.5 0.3 13 15" style="position:absolute;left:885px;top:491px"><path d="M6.5 0.6V2.2" stroke="#dadadd" stroke-width="1.4"/><path d="M1.2 11.2L2.6 8.6V5.8C2.6 3.6 4.3 2.1 6.5 2.1C8.7 2.1 10.4 3.6 10.4 5.8V8.6L11.8 11.2Z" fill="none" stroke="#dadadd" stroke-width="1.3" stroke-linejoin="round"/><path d="M4.9 12.2H8.1C8.1 13.3 7.4 14 6.5 14C5.6 14 4.9 13.3 4.9 12.2Z" fill="#dadadd"/></svg>
<div class="a" style="left:14px;top:512px;width:918px;height:28px;border-bottom:1px solid #ececee"></div>
<div class="t" style="left:20px;top:520px;font-size:12px;color:#55555a;letter-spacing:-0.2px">09:30</div>
<svg class="a" style="left:55px;top:521px" width="14" height="11" viewBox="0 0 14 11" shape-rendering="crispEdges"><rect x="0" y="0" width="14" height="1" fill="#d50c0c"/><rect x="0" y="1" width="14" height="1" fill="#fff"/><rect x="0" y="2" width="14" height="1" fill="#d50c0c"/><rect x="0" y="3" width="14" height="1" fill="#fff"/><rect x="0" y="4" width="14" height="1" fill="#d50c0c"/><rect x="0" y="5" width="14" height="1" fill="#fff"/><rect x="0" y="6" width="14" height="1" fill="#d50c0c"/><rect x="0" y="7" width="14" height="1" fill="#fff"/><rect x="0" y="8" width="14" height="1" fill="#d50c0c"/><rect x="0" y="9" width="14" height="1" fill="#fff"/><rect x="0" y="10" width="14" height="1" fill="#d50c0c"/><rect x="0" y="0" width="9" height="7" fill="#c4c6e6"/><rect x="1" y="0" width="1" height="1" fill="#06068f"/><rect x="3" y="0" width="1" height="1" fill="#06068f"/><rect x="5" y="0" width="1" height="1" fill="#06068f"/><rect x="7" y="0" width="1" height="1" fill="#06068f"/><rect x="0" y="1" width="1" height="1" fill="#06068f"/><rect x="2" y="1" width="1" height="1" fill="#06068f"/><rect x="4" y="1" width="1" height="1" fill="#06068f"/><rect x="6" y="1" width="1" height="1" fill="#06068f"/><rect x="8" y="1" width="1" height="1" fill="#06068f"/><rect x="1" y="2" width="1" height="1" fill="#06068f"/><rect x="3" y="2" width="1" height="1" fill="#06068f"/><rect x="5" y="2" width="1" height="1" fill="#06068f"/><rect x="7" y="2" width="1" height="1" fill="#06068f"/><rect x="0" y="3" width="1" height="1" fill="#06068f"/><rect x="2" y="3" width="1" height="1" fill="#06068f"/><rect x="4" y="3" width="1" height="1" fill="#06068f"/><rect x="6" y="3" width="1" height="1" fill="#06068f"/><rect x="8" y="3" width="1" height="1" fill="#06068f"/><rect x="1" y="4" width="1" height="1" fill="#06068f"/><rect x="3" y="4" width="1" height="1" fill="#06068f"/><rect x="5" y="4" width="1" height="1" fill="#06068f"/><rect x="7" y="4" width="1" height="1" fill="#06068f"/><rect x="0" y="5" width="1" height="1" fill="#06068f"/><rect x="2" y="5" width="1" height="1" fill="#06068f"/><rect x="4" y="5" width="1" height="1" fill="#06068f"/><rect x="6" y="5" width="1" height="1" fill="#06068f"/><rect x="8" y="5" width="1" height="1" fill="#06068f"/><rect x="1" y="6" width="1" height="1" fill="#06068f"/><rect x="3" y="6" width="1" height="1" fill="#06068f"/><rect x="5" y="6" width="1" height="1" fill="#06068f"/><rect x="7" y="6" width="1" height="1" fill="#06068f"/></svg>
<div class="t" style="left:72px;top:520px;font-size:12px;font-weight:bold;color:#3c3c42;transform-origin:0 0;transform:scaleX(0.9)">USD</div>
<div class="t" style="left:101px;top:520px;font-size:12px;color:#515157;transform-origin:0 0;transform:scaleX(0.973)">Fed's Quarles speech</div>
<div class="a" style="left:648px;top:520px;width:34px;height:10px;border:1px solid #e6891f;background:#fff"></div>
<div class="a" style="left:648px;top:520px;width:23px;height:12px;background:#e6891f"></div>
<div class="a" style="left:756px;top:518px;width:47px;height:17px;background:#6089b4"></div>
<div class="t" style="left:756px;width:47px;text-align:center;top:521.6px;font-size:9.5px;font-weight:bold;font-style:italic;color:#fff;transform:scaleX(0.94)">SPEECH</div>
<svg width="13" height="15" viewBox="0.5 0.3 13 15" style="position:absolute;left:885px;top:519px"><path d="M6.5 0.6V2.2" stroke="#dadadd" stroke-width="1.4"/><path d="M1.2 11.2L2.6 8.6V5.8C2.6 3.6 4.3 2.1 6.5 2.1C8.7 2.1 10.4 3.6 10.4 5.8V8.6L11.8 11.2Z" fill="none" stroke="#dadadd" stroke-width="1.3" stroke-linejoin="round"/><path d="M4.9 12.2H8.1C8.1 13.3 7.4 14 6.5 14C5.6 14 4.9 13.3 4.9 12.2Z" fill="#dadadd"/></svg>
<div class="a" style="left:14px;top:541px;width:918px;height:26px;border-bottom:1px solid #ececee"></div>
<div class="t" style="left:20px;top:548px;font-size:12px;color:#55555a;letter-spacing:-0.2px">12:15</div>
<svg class="a" style="left:55px;top:549px" width="14" height="11" viewBox="0 0 14 11" shape-rendering="crispEdges"><rect x="0" y="0" width="14" height="11" fill="#fff"/><rect x="0" y="0" width="3" height="11" fill="#f01424"/><rect x="11" y="0" width="3" height="11" fill="#f01424"/><rect x="6" y="2" width="2" height="1" fill="#ec1a24"/><rect x="5" y="3" width="4" height="1" fill="#ec1a24"/><rect x="4" y="4" width="6" height="3" fill="#ec1a24"/><rect x="5" y="7" width="4" height="1" fill="#ec1a24"/><rect x="6" y="8" width="2" height="1" fill="#f8c4c4"/></svg>
<div class="t" style="left:72px;top:548px;font-size:12px;font-weight:bold;color:#3c3c42;transform-origin:0 0;transform:scaleX(0.9)">CAD</div>
<div class="t" style="left:101px;top:548px;font-size:12px;color:#515157;transform-origin:0 0;transform:scaleX(0.9937)">Housing Starts s.a (YoY)(Sep)</div>
<div class="a" style="left:648px;top:548px;width:34px;height:10px;border:1px solid #f3c562;background:#fff"></div>
<div class="a" style="left:648px;top:548px;width:12px;height:12px;background:#f3c562"></div>
<div class="t" style="left:680px;width:40px;text-align:right;top:549px;font-size:12px;font-weight:bold;color:#3a3a40">-</div>
<div class="t" style="left:720px;width:40px;text-align:right;top:549px;font-size:12px;font-weight:bold;color:#3a3a40">-</div>
<div class="t" style="left:761px;width:60px;text-align:right;top:548px;font-size:12px;font-weight:bold;color:#4e4e54">255K</div>
<div class="t" style="left:812px;width:61px;text-align:right;top:548px;font-size:12px;font-weight:bold;color:#4e4e54">260.2K</div>
<svg width="13" height="15" viewBox="0.5 0.3 13 15" style="position:absolute;left:885px;top:547px"><path d="M6.5 0.6V2.2" stroke="#dadadd" stroke-width="1.4"/><path d="M1.2 11.2L2.6 8.6V5.8C2.6 3.6 4.3 2.1 6.5 2.1C8.7 2.1 10.4 3.6 10.4 5.8V8.6L11.8 11.2Z" fill="none" stroke="#dadadd" stroke-width="1.3" stroke-linejoin="round"/><path d="M4.9 12.2H8.1C8.1 13.3 7.4 14 6.5 14C5.6 14 4.9 13.3 4.9 12.2Z" fill="#dadadd"/></svg>
<div class="a" style="left:14px;top:568px;width:918px;height:26px;border-bottom:1px solid #ececee"></div>
<div class="t" style="left:20px;top:575px;font-size:12px;color:#55555a;letter-spacing:-0.2px">12:30</div>
<svg class="a" style="left:55px;top:576px" width="14" height="11" viewBox="0 0 14 11" shape-rendering="crispEdges"><rect x="0" y="0" width="14" height="11" fill="#fff"/><rect x="0" y="0" width="3" height="11" fill="#f01424"/><rect x="11" y="0" width="3" height="11" fill="#f01424"/><rect x="6" y="2" width="2" height="1" fill="#ec1a24"/><rect x="5" y="3" width="4" height="1" fill="#ec1a24"/><rect x="4" y="4" width="6" height="3" fill="#ec1a24"/><rect x="5" y="7" width="4" height="1" fill="#ec1a24"/><rect x="6" y="8" width="2" height="1" fill="#f8c4c4"/></svg>
<div class="t" style="left:72px;top:575px;font-size:12px;font-weight:bold;color:#3c3c42;transform-origin:0 0;transform:scaleX(0.9)">CAD</div>
<div class="t" style="left:101px;top:575px;font-size:12px;color:#515157;transform-origin:0 0;transform:scaleX(1.0017)">Foreign Portfolio Investment in Canadian Securities(Aug)</div>
<div class="a" style="left:648px;top:575px;width:34px;height:10px;border:1px solid #f3c562;background:#fff"></div>
<div class="a" style="left:648px;top:575px;width:12px;height:12px;background:#f3c562"></div>
<div class="t" style="left:680px;width:40px;text-align:right;top:576px;font-size:12px;font-weight:bold;color:#3a3a40">-</div>
<div class="t" style="left:720px;width:40px;text-align:right;top:576px;font-size:12px;font-weight:bold;color:#3a3a40">-</div>
<div class="t" style="left:761px;width:60px;text-align:right;top:575px;font-size:12px;font-weight:bold;color:#4e4e54">-</div>
<div class="t" style="left:812px;width:61px;text-align:right;top:575px;font-size:12px;font-weight:bold;color:#4e4e54">$14.19B</div>
<svg width="13" height="15" viewBox="0.5 0.3 13 15" style="position:absolute;left:885px;top:574px"><path d="M6.5 0.6V2.2" stroke="#dadadd" stroke-width="1.4"/><path d="M1.2 11.2L2.6 8.6V5.8C2.6 3.6 4.3 2.1 6.5 2.1C8.7 2.1 10.4 3.6 10.4 5.8V8.6L11.8 11.2Z" fill="none" stroke="#dadadd" stroke-width="1.3" stroke-linejoin="round"/><path d="M4.9 12.2H8.1C8.1 13.3 7.4 14 6.5 14C5.6 14 4.9 13.3 4.9 12.2Z" fill="#dadadd"/></svg>
<div class="a" style="left:14px;top:595px;width:918px;height:26px;border-bottom:1px solid #ececee"></div>
<div class="t" style="left:20px;top:602px;font-size:12px;color:#55555a;letter-spacing:-0.2px">12:30</div>
<svg class="a" style="left:55px;top:603px" width="14" height="11" viewBox="0 0 14 11" shape-rendering="crispEdges"><rect x="0" y="0" width="14" height="11" fill="#fff"/><rect x="0" y="0" width="3" height="11" fill="#f01424"/><rect x="11" y="0" width="3" height="11" fill="#f01424"/><rect x="6" y="2" width="2" height="1" fill="#ec1a24"/><rect x="5" y="3" width="4" height="1" fill="#ec1a24"/><rect x="4" y="4" width="6" height="3" fill="#ec1a24"/><rect x="5" y="7" width="4" height="1" fill="#ec1a24"/><rect x="6" y="8" width="2" height="1" fill="#f8c4c4"/></svg>
<div class="t" style="left:72px;top:602px;font-size:12px;font-weight:bold;color:#3c3c42;transform-origin:0 0;transform:scaleX(0.9)">CAD</div>
<div class="t" style="left:101px;top:602px;font-size:12px;color:#515157;transform-origin:0 0;transform:scaleX(1.0017)">Canadian Portfolio Investment in Foreign Securities(Aug)</div>
<div class="a" style="left:648px;top:602px;width:34px;height:10px;border:1px solid #f3c562;background:#fff"></div>
<div class="a" style="left:648px;top:602px;width:12px;height:12px;background:#f3c562"></div>
<div class="t" style="left:680px;width:40px;text-align:right;top:603px;font-size:12px;font-weight:bold;color:#3a3a40">-</div>
<div class="t" style="left:720px;width:40px;text-align:right;top:603px;font-size:12px;font-weight:bold;color:#3a3a40">-</div>
<div class="t" style="left:761px;width:60px;text-align:right;top:602px;font-size:12px;font-weight:bold;color:#4e4e54">-</div>
<div class="t" style="left:812px;width:61px;text-align:right;top:602px;font-size:12px;font-weight:bold;color:#4e4e54">$-4.69B</div>
<svg width="13" height="15" viewBox="0.5 0.3 13 15" style="position:absolute;left:885px;top:601px"><path d="M6.5 0.6V2.2" stroke="#dadadd" stroke-width="1.4"/><path d="M1.2 11.2L2.6 8.6V5.8C2.6 3.6 4.3 2.1 6.5 2.1C8.7 2.1 10.4 3.6 10.4 5.8V8.6L11.8 11.2Z" fill="none" stroke="#dadadd" stroke-width="1.3" stroke-linejoin="round"/><path d="M4.9 12.2H8.1C8.1 13.3 7.4 14 6.5 14C5.6 14 4.9 13.3 4.9 12.2Z" fill="#dadadd"/></svg>
<div class="a" style="left:14px;top:622px;width:918px;height:26px;border-bottom:1px solid #ececee"></div>
<div class="t" style="left:20px;top:629px;font-size:12px;color:#55555a;letter-spacing:-0.2px">13:15</div>
<svg class="a" style="left:55px;top:630px" width="14" height="11" viewBox="0 0 14 11" shape-rendering="crispEdges"><rect x="0" y="0" width="14" height="1" fill="#d50c0c"/><rect x="0" y="1" width="14" height="1" fill="#fff"/><rect x="0" y="2" width="14" height="1" fill="#d50c0c"/><rect x="0" y="3" width="14" height="1" fill="#fff"/><rect x="0" y="4" width="14" height="1" fill="#d50c0c"/><rect x="0" y="5" width="14" height="1" fill="#fff"/><rect x="0" y="6" width="14" height="1" fill="#d50c0c"/><rect x="0" y="7" width="14" height="1" fill="#fff"/><rect x="0" y="8" width="14" height="1" fill="#d50c0c"/><rect x="0" y="9" width="14" height="1" fill="#fff"/><rect x="0" y="10" width="14" height="1" fill="#d50c0c"/><rect x="0" y="0" width="9" height="7" fill="#c4c6e6"/><rect x="1" y="0" width="1" height="1" fill="#06068f"/><rect x="3" y="0" width="1" height="1" fill="#06068f"/><rect x="5" y="0" width="1" height="1" fill="#06068f"/><rect x="7" y="0" width="1" height="1" fill="#06068f"/><rect x="0" y="1" width="1" height="1" fill="#06068f"/><rect x="2" y="1" width="1" height="1" fill="#06068f"/><rect x="4" y="1" width="1" height="1" fill="#06068f"/><rect x="6" y="1" width="1" height="1" fill="#06068f"/><rect x="8" y="1" width="1" height="1" fill="#06068f"/><rect x="1" y="2" width="1" height="1" fill="#06068f"/><rect x="3" y="2" width="1" height="1" fill="#06068f"/><rect x="5" y="2" width="1" height="1" fill="#06068f"/><rect x="7" y="2" width="1" height="1" fill="#06068f"/><rect x="0" y="3" width="1" height="1" fill="#06068f"/><rect x="2" y="3" width="1" height="1" fill="#06068f"/><rect x="4" y="3" width="1" height="1" fill="#06068f"/><rect x="6" y="3" width="1" height="1" fill="#06068f"/><rect x="8" y="3" width="1" height="1" fill="#06068f"/><rect x="1" y="4" width="1" height="1" fill="#06068f"/><rect x="3" y="4" width="1" height="1" fill="#06068f"/><rect x="5" y="4" width="1" height="1" fill="#06068f"/><rect x="7" y="4" width="1" height="1" fill="#06068f"/><rect x="0" y="5" width="1" height="1" fill="#06068f"/><rect x="2" y="5" width="1" height="1" fill="#06068f"/><rect x="4" y="5" width="1" height="1" fill="#06068f"/><rect x="6" y="5" width="1" height="1" fill="#06068f"/><rect x="8" y="5" width="1" height="1" fill="#06068f"/><rect x="1" y="6" width="1" height="1" fill="#06068f"/><rect x="3" y="6" width="1" height="1" fill="#06068f"/><rect x="5" y="6" width="1" height="1" fill="#06068f"/><rect x="7" y="6" width="1" height="1" fill="#06068f"/></svg>
<div class="t" style="left:72px;top:629px;font-size:12px;font-weight:bold;color:#3c3c42;transform-origin:0 0;transform:scaleX(0.9)">USD</div>
<div class="t" style="left:101px;top:629px;font-size:12px;color:#515157;transform-origin:0 0;transform:scaleX(1.0149)">Industrial Production (MoM)(Sep)</div>
<div class="a" style="left:648px;top:629px;width:34px;height:10px;border:1px solid #f3c562;background:#fff"></div>
<div class="a" style="left:648px;top:629px;width:12px;height:12px;background:#f3c562"></div>
<div class="t" style="left:680px;width:40px;text-align:right;top:630px;font-size:12px;font-weight:bold;color:#3a3a40">-</div>
<div class="t" style="left:720px;width:40px;text-align:right;top:630px;font-size:12px;font-weight:bold;color:#3a3a40">-</div>
<div class="t" style="left:761px;width:60px;text-align:right;top:629px;font-size:12px;font-weight:bold;color:#4e4e54">0.2%</div>
<div class="t" style="left:812px;width:61px;text-align:right;top:629px;font-size:12px;font-weight:bold;color:#4e4e54">0.4%</div>
<svg width="13" height="15" viewBox="0.5 0.3 13 15" style="position:absolute;left:885px;top:628px"><path d="M6.5 0.6V2.2" stroke="#dadadd" stroke-width="1.4"/><path d="M1.2 11.2L2.6 8.6V5.8C2.6 3.6 4.3 2.1 6.5 2.1C8.7 2.1 10.4 3.6 10.4 5.8V8.6L11.8 11.2Z" fill="none" stroke="#dadadd" stroke-width="1.3" stroke-linejoin="round"/><path d="M4.9 12.2H8.1C8.1 13.3 7.4 14 6.5 14C5.6 14 4.9 13.3 4.9 12.2Z" fill="#dadadd"/></svg>
<div class="a" style="left:14px;top:649px;width:918px;height:26px;border-bottom:1px solid #ececee"></div>
<div class="t" style="left:20px;top:656px;font-size:12px;color:#55555a;letter-spacing:-0.2px">13:15</div>
<svg class="a" style="left:55px;top:657px" width="14" height="11" viewBox="0 0 14 11" shape-rendering="crispEdges"><rect x="0" y="0" width="14" height="1" fill="#d50c0c"/><rect x="0" y="1" width="14" height="1" fill="#fff"/><rect x="0" y="2" width="14" height="1" fill="#d50c0c"/><rect x="0" y="3" width="14" height="1" fill="#fff"/><rect x="0" y="4" width="14" height="1" fill="#d50c0c"/><rect x="0" y="5" width="14" height="1" fill="#fff"/><rect x="0" y="6" width="14" height="1" fill="#d50c0c"/><rect x="0" y="7" width="14" height="1" fill="#fff"/><rect x="0" y="8" width="14" height="1" fill="#d50c0c"/><rect x="0" y="9" width="14" height="1" fill="#fff"/><rect x="0" y="10" width="14" height="1" fill="#d50c0c"/><rect x="0" y="0" width="9" height="7" fill="#c4c6e6"/><rect x="1" y="0" width="1" height="1" fill="#06068f"/><rect x="3" y="0" width="1" height="1" fill="#06068f"/><rect x="5" y="0" width="1" height="1" fill="#06068f"/><rect x="7" y="0" width="1" height="1" fill="#06068f"/><rect x="0" y="1" width="1" height="1" fill="#06068f"/><rect x="2" y="1" width="1" height="1" fill="#06068f"/><rect x="4" y="1" width="1" height="1" fill="#06068f"/><rect x="6" y="1" width="1" height="1" fill="#06068f"/><rect x="8" y="1" width="1" height="1" fill="#06068f"/><rect x="1" y="2" width="1" height="1" fill="#06068f"/><rect x="3" y="2" width="1" height="1" fill="#06068f"/><rect x="5" y="2" width="1" height="1" fill="#06068f"/><rect x="7" y="2" width="1" height="1" fill="#06068f"/><rect x="0" y="3" width="1" height="1" fill="#06068f"/><rect x="2" y="3" width="1" height="1" fill="#06068f"/><rect x="4" y="3" width="1" height="1" fill="#06068f"/><rect x="6" y="3" width="1" height="1" fill="#06068f"/><rect x="8" y="3" width="1" height="1" fill="#06068f"/><rect x="1" y="4" width="1" height="1" fill="#06068f"/><rect x="3" y="4" width="1" height="1" fill="#06068f"/><rect x="5" y="4" width="1" height="1" fill="#06068f"/><rect x="7" y="4" width="1" height="1" fill="#06068f"/><rect x="0" y="5" width="1" height="1" fill="#06068f"/><rect x="2" y="5" width="1" height="1" fill="#06068f"/><rect x="4" y="5" width="1" height="1" fill="#06068f"/><rect x="6" y="5" width="1" height="1" fill="#06068f"/><rect x="8" y="5" width="1" height="1" fill="#06068f"/><rect x="1" y="6" width="1" height="1" fill="#06068f"/><rect x="3" y="6" width="1" height="1" fill="#06068f"/><rect x="5" y="6" width="1" height="1" fill="#06068f"/><rect x="7" y="6" width="1" height="1" fill="#06068f"/></svg>
<div class="t" style="left:72px;top:656px;font-size:12px;font-weight:bold;color:#3c3c42;transform-origin:0 0;transform:scaleX(0.9)">USD</div>
<div class="t" style="left:101px;top:656px;font-size:12px;color:#515157;transform-origin:0 0;transform:scaleX(1.0015)">Capacity Utilization(Sep)</div>
<div class="a" style="left:648px;top:656px;width:34px;height:10px;border:1px solid #f3c562;background:#fff"></div>
<div class="a" style="left:648px;top:656px;width:12px;height:12px;background:#f3c562"></div>
<div class="t" style="left:680px;width:40px;text-align:right;top:657px;font-size:12px;font-weight:bold;color:#3a3a40">-</div>
<div class="t" style="left:720px;width:40px;text-align:right;top:657px;font-size:12px;font-weight:bold;color:#3a3a40">-</div>
<div class="t" style="left:761px;width:60px;text-align:right;top:656px;font-size:12px;font-weight:bold;color:#4e4e54">76.5%</div>
<div class="t" style="left:812px;width:61px;text-align:right;top:656px;font-size:12px;font-weight:bold;color:#4e4e54">76.4%</div>
<svg width="13" height="15" viewBox="0.5 0.3 13 15" style="position:absolute;left:885px;top:655px"><path d="M6.5 0.6V2.2" stroke="#dadadd" stroke-width="1.4"/><path d="M1.2 11.2L2.6 8.6V5.8C2.6 3.6 4.3 2.1 6.5 2.1C8.7 2.1 10.4 3.6 10.4 5.8V8.6L11.8 11.2Z" fill="none" stroke="#dadadd" stroke-width="1.3" stroke-linejoin="round"/><path d="M4.9 12.2H8.1C8.1 13.3 7.4 14 6.5 14C5.6 14 4.9 13.3 4.9 12.2Z" fill="#dadadd"/></svg>
<div class="a" style="left:14px;top:676px;width:918px;height:26px;border-bottom:1px solid #ececee"></div>
<div class="t" style="left:20px;top:683px;font-size:12px;color:#55555a;letter-spacing:-0.2px">14:00</div>
<svg class="a" style="left:55px;top:684px" width="14" height="11" viewBox="0 0 14 11" shape-rendering="crispEdges"><rect x="0" y="0" width="14" height="1" fill="#d50c0c"/><rect x="0" y="1" width="14" height="1" fill="#fff"/><rect x="0" y="2" width="14" height="1" fill="#d50c0c"/><rect x="0" y="3" width="14" height="1" fill="#fff"/><rect x="0" y="4" width="14" height="1" fill="#d50c0c"/><rect x="0" y="5" width="14" height="1" fill="#fff"/><rect x="0" y="6" width="14" height="1" fill="#d50c0c"/><rect x="0" y="7" width="14" height="1" fill="#fff"/><rect x="0" y="8" width="14" height="1" fill="#d50c0c"/><rect x="0" y="9" width="14" height="1" fill="#fff"/><rect x="0" y="10" width="14" height="1" fill="#d50c0c"/><rect x="0" y="0" width="9" height="7" fill="#c4c6e6"/><rect x="1" y="0" width="1" height="1" fill="#06068f"/><rect x="3" y="0" width="1" height="1" fill="#06068f"/><rect x="5" y="0" width="1" height="1" fill="#06068f"/><rect x="7" y="0" width="1" height="1" fill="#06068f"/><rect x="0" y="1" width="1" height="1" fill="#06068f"/><rect x="2" y="1" width="1" height="1" fill="#06068f"/><rect x="4" y="1" width="1" height="1" fill="#06068f"/><rect x="6" y="1" width="1" height="1" fill="#06068f"/><rect x="8" y="1" width="1" height="1" fill="#06068f"/><rect x="1" y="2" width="1" height="1" fill="#06068f"/><rect x="3" y="2" width="1" height="1" fill="#06068f"/><rect x="5" y="2" width="1" height="1" fill="#06068f"/><rect x="7" y="2" width="1" height="1" fill="#06068f"/><rect x="0" y="3" width="1" height="1" fill="#06068f"/><rect x="2" y="3" width="1" height="1" fill="#06068f"/><rect x="4" y="3" width="1" height="1" fill="#06068f"/><rect x="6" y="3" width="1" height="1" fill="#06068f"/><rect x="8" y="3" width="1" height="1" fill="#06068f"/><rect x="1" y="4" width="1" height="1" fill="#06068f"/><rect x="3" y="4" width="1" height="1" fill="#06068f"/><rect x="5" y="4" width="1" height="1" fill="#06068f"/><rect x="7" y="4" width="1" height="1" fill="#06068f"/><rect x="0" y="5" width="1" height="1" fill="#06068f"/><rect x="2" y="5" width="1" height="1" fill="#06068f"/><rect x="4" y="5" width="1" height="1" fill="#06068f"/><rect x="6" y="5" width="1" height="1" fill="#06068f"/><rect x="8" y="5" width="1" height="1" fill="#06068f"/><rect x="1" y="6" width="1" height="1" fill="#06068f"/><rect x="3" y="6" width="1" height="1" fill="#06068f"/><rect x="5" y="6" width="1" height="1" fill="#06068f"/><rect x="7" y="6" width="1" height="1" fill="#06068f"/></svg>
<div class="t" style="left:72px;top:683px;font-size:12px;font-weight:bold;color:#3c3c42;transform-origin:0 0;transform:scaleX(0.9)">USD</div>
<div class="t" style="left:101px;top:683px;font-size:12px;color:#515157;transform-origin:0 0;transform:scaleX(1.0011)">NAHB Housing Market Index(Oct)</div>
<div class="a" style="left:648px;top:683px;width:34px;height:10px;border:1px solid #f3c562;background:#fff"></div>
<div class="a" style="left:648px;top:683px;width:12px;height:12px;background:#f3c562"></div>
<div class="t" style="left:680px;width:40px;text-align:right;top:684px;font-size:12px;font-weight:bold;color:#3a3a40">-</div>
<div class="t" style="left:720px;width:40px;text-align:right;top:684px;font-size:12px;font-weight:bold;color:#3a3a40">-</div>
<div class="t" style="left:761px;width:60px;text-align:right;top:683px;font-size:12px;font-weight:bold;color:#4e4e54">75</div>
<div class="t" style="left:812px;width:61px;text-align:right;top:683px;font-size:12px;font-weight:bold;color:#4e4e54">76</div>
<svg width="13" height="15" viewBox="0.5 0.3 13 15" style="position:absolute;left:885px;top:682px"><path d="M6.5 0.6V2.2" stroke="#dadadd" stroke-width="1.4"/><path d="M1.2 11.2L2.6 8.6V5.8C2.6 3.6 4.3 2.1 6.5 2.1C8.7 2.1 10.4 3.6 10.4 5.8V8.6L11.8 11.2Z" fill="none" stroke="#dadadd" stroke-width="1.3" stroke-linejoin="round"/><path d="M4.9 12.2H8.1C8.1 13.3 7.4 14 6.5 14C5.6 14 4.9 13.3 4.9 12.2Z" fill="#dadadd"/></svg>
<div class="a" style="left:14px;top:703px;width:918px;height:28px;border-bottom:1px solid #ececee"></div>
<div class="t" style="left:20px;top:711px;font-size:12px;color:#55555a;letter-spacing:-0.2px">14:30</div>
<svg class="a" style="left:55px;top:712px" width="14" height="11" viewBox="0 0 14 11" shape-rendering="crispEdges"><rect x="0" y="0" width="14" height="11" fill="#fff"/><rect x="0" y="0" width="3" height="11" fill="#f01424"/><rect x="11" y="0" width="3" height="11" fill="#f01424"/><rect x="6" y="2" width="2" height="1" fill="#ec1a24"/><rect x="5" y="3" width="4" height="1" fill="#ec1a24"/><rect x="4" y="4" width="6" height="3" fill="#ec1a24"/><rect x="5" y="7" width="4" height="1" fill="#ec1a24"/><rect x="6" y="8" width="2" height="1" fill="#f8c4c4"/></svg>
<div class="t" style="left:72px;top:711px;font-size:12px;font-weight:bold;color:#3c3c42;transform-origin:0 0;transform:scaleX(0.9)">CAD</div>
<div class="t" style="left:101px;top:711px;font-size:12px;color:#515157;transform-origin:0 0;transform:scaleX(0.9838)">Bank of Canada Business Outlook Survey</div>
<div class="a" style="left:648px;top:711px;width:34px;height:10px;border:1px solid #e6891f;background:#fff"></div>
<div class="a" style="left:648px;top:711px;width:23px;height:12px;background:#e6891f"></div>
<div class="a" style="left:756px;top:709px;width:47px;height:17px;background:#6089b4"></div>
<div class="t" style="left:756px;width:47px;text-align:center;top:712.6px;font-size:9.5px;font-weight:bold;font-style:italic;color:#fff;transform:scaleX(0.94)">REPORT</div>
<svg width="13" height="15" viewBox="0.5 0.3 13 15" style="position:absolute;left:885px;top:710px"><path d="M6.5 0.6V2.2" stroke="#dadadd" stroke-width="1.4"/><path d="M1.2 11.2L2.6 8.6V5.8C2.6 3.6 4.3 2.1 6.5 2.1C8.7 2.1 10.4 3.6 10.4 5.8V8.6L11.8 11.2Z" fill="none" stroke="#dadadd" stroke-width="1.3" stroke-linejoin="round"/><path d="M4.9 12.2H8.1C8.1 13.3 7.4 14 6.5 14C5.6 14 4.9 13.3 4.9 12.2Z" fill="#dadadd"/></svg>
<div class="a" style="left:14px;top:732px;width:918px;height:26px;border-bottom:1px solid #ececee"></div>
<div class="t" style="left:20px;top:739px;font-size:12px;color:#55555a;letter-spacing:-0.2px">15:30</div>
<svg class="a" style="left:55px;top:740px" width="14" height="11" viewBox="0 0 14 11" shape-rendering="crispEdges"><rect x="0" y="0" width="14" height="1" fill="#d50c0c"/><rect x="0" y="1" width="14" height="1" fill="#fff"/><rect x="0" y="2" width="14" height="1" fill="#d50c0c"/><rect x="0" y="3" width="14" height="1" fill="#fff"/><rect x="0" y="4" width="14" height="1" fill="#d50c0c"/><rect x="0" y="5" width="14" height="1" fill="#fff"/><rect x="0" y="6" width="14" height="1" fill="#d50c0c"/><rect x="0" y="7" width="14" height="1" fill="#fff"/><rect x="0" y="8" width="14" height="1" fill="#d50c0c"/><rect x="0" y="9" width="14" height="1" fill="#fff"/><rect x="0" y="10" width="14" height="1" fill="#d50c0c"/><rect x="0" y="0" width="9" height="7" fill="#c4c6e6"/><rect x="1" y="0" width="1" height="1" fill="#06068f"/><rect x="3" y="0" width="1" height="1" fill="#06068f"/><rect x="5" y="0" width="1" height="1" fill="#06068f"/><rect x="7" y="0" width="1" height="1" fill="#06068f"/><rect x="0" y="1" width="1" height="1" fill="#06068f"/><rect x="2" y="1" width="1" height="1" fill="#06068f"/><rect x="4" y="1" width="1" height="1" fill="#06068f"/><rect x="6" y="1" width="1" height="1" fill="#06068f"/><rect x="8" y="1" width="1" height="1" fill="#06068f"/><rect x="1" y="2" width="1" height="1" fill="#06068f"/><rect x="3" y="2" width="1" height="1" fill="#06068f"/><rect x="5" y="2" width="1" height="1" fill="#06068f"/><rect x="7" y="2" width="1" height="1" fill="#06068f"/><rect x="0" y="3" width="1" height="1" fill="#06068f"/><rect x="2" y="3" width="1" height="1" fill="#06068f"/><rect x="4" y="3" width="1" height="1" fill="#06068f"/><rect x="6" y="3" width="1" height="1" fill="#06068f"/><rect x="8" y="3" width="1" height="1" fill="#06068f"/><rect x="1" y="4" width="1" height="1" fill="#06068f"/><rect x="3" y="4" width="1" height="1" fill="#06068f"/><rect x="5" y="4" width="1" height="1" fill="#06068f"/><rect x="7" y="4" width="1" height="1" fill="#06068f"/><rect x="0" y="5" width="1" height="1" fill="#06068f"/><rect x="2" y="5" width="1" height="1" fill="#06068f"/><rect x="4" y="5" width="1" height="1" fill="#06068f"/><rect x="6" y="5" width="1" height="1" fill="#06068f"/><rect x="8" y="5" width="1" height="1" fill="#06068f"/><rect x="1" y="6" width="1" height="1" fill="#06068f"/><rect x="3" y="6" width="1" height="1" fill="#06068f"/><rect x="5" y="6" width="1" height="1" fill="#06068f"/><rect x="7" y="6" width="1" height="1" fill="#06068f"/></svg>
<div class="t" style="left:72px;top:739px;font-size:12px;font-weight:bold;color:#3c3c42;transform-origin:0 0;transform:scaleX(0.9)">USD</div>
<div class="t" style="left:101px;top:739px;font-size:12px;color:#515157;transform-origin:0 0;transform:scaleX(1.0152)">3-Month Bill Auction</div>
<div class="a" style="left:648px;top:739px;width:34px;height:10px;border:1px solid #f3c562;background:#fff"></div>
<div class="a" style="left:648px;top:739px;width:12px;height:12px;background:#f3c562"></div>
<div class="t" style="left:680px;width:40px;text-align:right;top:740px;font-size:12px;font-weight:bold;color:#3a3a40">-</div>
<div class="t" style="left:720px;width:40px;text-align:right;top:740px;font-size:12px;font-weight:bold;color:#3a3a40">-</div>
<div class="t" style="left:761px;width:60px;text-align:right;top:739px;font-size:12px;font-weight:bold;color:#4e4e54">-</div>
<div class="t" style="left:812px;width:61px;text-align:right;top:739px;font-size:12px;font-weight:bold;color:#4e4e54">0.05%</div>
<svg width="13" height="15" viewBox="0.5 0.3 13 15" style="position:absolute;left:885px;top:738px"><path d="M6.5 0.6V2.2" stroke="#dadadd" stroke-width="1.4"/><path d="M1.2 11.2L2.6 8.6V5.8C2.6 3.6 4.3 2.1 6.5 2.1C8.7 2.1 10.4 3.6 10.4 5.8V8.6L11.8 11.2Z" fill="none" stroke="#dadadd" stroke-width="1.3" stroke-linejoin="round"/><path d="M4.9 12.2H8.1C8.1 13.3 7.4 14 6.5 14C5.6 14 4.9 13.3 4.9 12.2Z" fill="#dadadd"/></svg>
<div class="a" style="left:14px;top:139px;width:1px;height:619px;background:#e8e8eb"></div>
<div class="a" style="left:931px;top:139px;width:1px;height:619px;background:#e8e8eb"></div>
</body></html>
